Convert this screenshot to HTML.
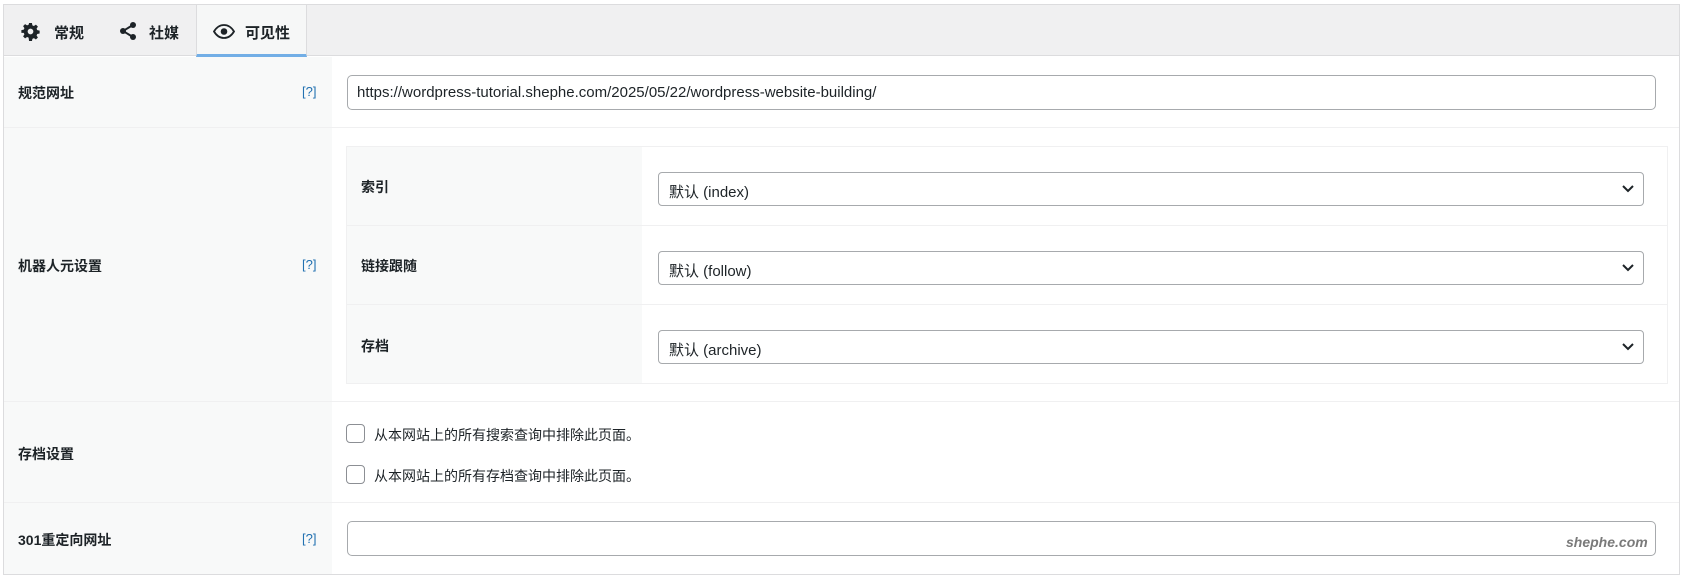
<!DOCTYPE html>
<html><head><meta charset="utf-8"><style>
*{box-sizing:border-box;margin:0;padding:0}
body{width:1687px;height:578px;background:#fff;font-family:"Liberation Sans","Noto Sans CJK SC",sans-serif;font-size:14px;color:#1d2327;position:relative;overflow:hidden}
.a{position:absolute}
.lab{position:absolute;left:18px;font-weight:bold;font-size:14px}
.q{position:absolute;left:302px;color:#2271b1;font-size:13px}
.inp{position:absolute;background:#fff;border:1px solid #a7aaad;border-radius:5px}
.sel{position:absolute;left:658px;width:986px;height:34px;background:#fff;border:1px solid #a7aaad;border-radius:4px;padding:8px 10px;font-size:15px}
.sel svg{position:absolute;right:8px;top:11px}
.cb{position:absolute;left:346px;width:19px;height:19px;border:1px solid #8c8f94;border-radius:4px;background:#fff}
.ct{position:absolute;left:374px;font-size:14px}
</style></head><body>
<div class="a" style="left:3px;top:4px;width:1677px;height:571px;border:1px solid #dcdcde;background:#fff"></div>
<div class="a" style="left:4px;top:5px;width:1675px;height:51px;background:#f0f0f1;border-bottom:1px solid #dcdcde"></div>
<div class="a" style="left:196px;top:5px;width:111px;height:52px;background:#f6f7f7;border-left:1px solid #dcdcde;border-right:1px solid #dcdcde;border-bottom:3px solid #72aee6"></div>
<svg class="a" style="left:21px;top:22px" width="19" height="19" viewBox="0 0 20 20"><path fill="#1d2327" d="M8.5 1h3l.5 2.5 1.6.7 2.1-1.4 2.1 2.1-1.4 2.1.7 1.6 2.5.5v3l-2.5.5-.7 1.6 1.4 2.1-2.1 2.1-2.1-1.4-1.6.7-.5 2.5h-3L8 16.5l-1.6-.7-2.1 1.4-2.1-2.1 1.4-2.1-.7-1.6L.4 11.5v-3L2.9 8l.7-1.6-1.4-2.1 2.1-2.1 2.1 1.4L8 2.9zM10 7a3 3 0 100 6 3 3 0 000-6z"/></svg>
<div class="a" style="left:54px;top:22px;font-weight:bold;font-size:15px">常规</div>
<svg class="a" style="left:118px;top:21px" width="20" height="20" viewBox="0 0 20 20"><circle cx="15" cy="4" r="3" fill="#1d2327"/><circle cx="15" cy="16" r="3" fill="#1d2327"/><circle cx="5" cy="10" r="3" fill="#1d2327"/><path d="M15 4L5 10l10 6" stroke="#1d2327" stroke-width="2" fill="none"/></svg>
<div class="a" style="left:149px;top:22px;font-weight:bold;font-size:15px">社媒</div>
<svg class="a" style="left:213px;top:24px" width="22" height="15" viewBox="0 0 22 15"><path d="M1 7.5C4 2.5 7.5 1 11 1s7 1.5 10 6.5C18 12.5 14.5 14 11 14S4 12.5 1 7.5z" fill="none" stroke="#1d2327" stroke-width="1.8"/><circle cx="11" cy="7.5" r="3.3" fill="#1d2327"/></svg>
<div class="a" style="left:245px;top:22px;font-weight:bold;font-size:15px">可见性</div>

<div class="a" style="left:4px;top:57px;width:328px;height:517px;background:#f8f9f9"></div>
<div class="a" style="left:4px;top:127px;width:1675px;height:1px;background:#f0f0f1"></div>
<div class="a" style="left:4px;top:401px;width:1675px;height:1px;background:#f0f0f1"></div>
<div class="a" style="left:4px;top:502px;width:1675px;height:1px;background:#f0f0f1"></div>

<div class="lab" style="top:83px">规范网址</div><div class="q" style="top:84px">[?]</div>
<div class="inp" style="left:347px;top:75px;width:1309px;height:35px;padding:8px 9px;font-size:15px">https://wordpress-tutorial.shephe.com/2025/05/22/wordpress-website-building/</div>

<div class="lab" style="top:256px">机器人元设置</div><div class="q" style="top:257px">[?]</div>
<div class="a" style="left:346px;top:146px;width:1322px;height:238px;border:1px solid #f0f0f1;background:#fff"></div>
<div class="a" style="left:347px;top:147px;width:295px;height:236px;background:#f8f9f9"></div>
<div class="a" style="left:347px;top:225px;width:1320px;height:1px;background:#f0f0f1"></div>
<div class="a" style="left:347px;top:304px;width:1320px;height:1px;background:#f0f0f1"></div>
<div class="lab" style="left:361px;top:177px">索引</div>
<div class="lab" style="left:361px;top:256px">链接跟随</div>
<div class="lab" style="left:361px;top:336px">存档</div>
<div class="sel" style="top:172px">默认 (index)<svg width="14" height="10" viewBox="0 0 14 10"><path d="M2 2l5 5 5-5" stroke="#1d2327" stroke-width="2" fill="none"/></svg></div>
<div class="sel" style="top:251px">默认 (follow)<svg width="14" height="10" viewBox="0 0 14 10"><path d="M2 2l5 5 5-5" stroke="#1d2327" stroke-width="2" fill="none"/></svg></div>
<div class="sel" style="top:330px">默认 (archive)<svg width="14" height="10" viewBox="0 0 14 10"><path d="M2 2l5 5 5-5" stroke="#1d2327" stroke-width="2" fill="none"/></svg></div>

<div class="lab" style="top:444px">存档设置</div>
<div class="cb" style="top:424px"></div><div class="ct" style="top:425px">从本网站上的所有搜索查询中排除此页面。</div>
<div class="cb" style="top:465px"></div><div class="ct" style="top:466px">从本网站上的所有存档查询中排除此页面。</div>

<div class="lab" style="top:530px">301重定向网址</div><div class="q" style="top:531px">[?]</div>
<div class="inp" style="left:347px;top:521px;width:1309px;height:35px"></div>
<div class="a" style="left:1566px;top:534px;font-style:italic;font-weight:bold;color:#7a7a7a;font-size:14px">shephe.com</div>
</body></html>
